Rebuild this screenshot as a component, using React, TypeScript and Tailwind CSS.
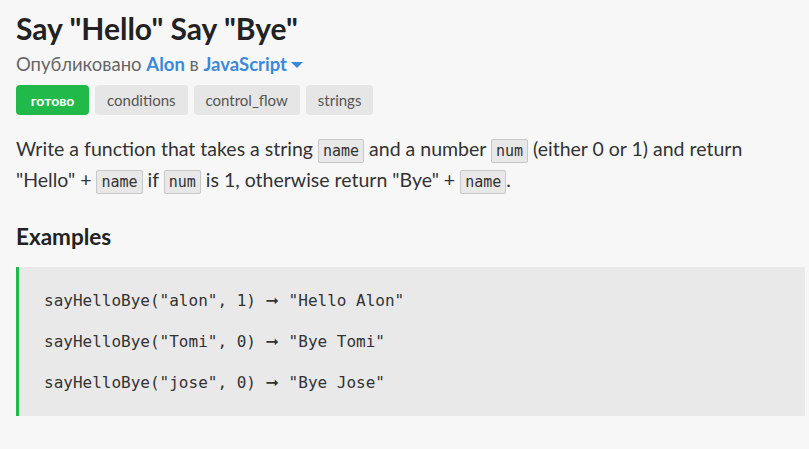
const TAGS = ["conditions", "control_flow", "strings"];

const EXAMPLES = [
  ['sayHelloBye("alon", 1)', '"Hello Alon"'],
  ['sayHelloBye("Tomi", 0)', '"Bye Tomi"'],
  ['sayHelloBye("jose", 0)', '"Bye Jose"'],
];

function Code({ children }: { children: string }) {
  return (
    <code className="rounded-[2px] border border-[#c8c8c8] bg-[#e8e8e8] px-[4px] py-[2px] font-['DejaVu_Sans_Mono',monospace] text-[15px] leading-none text-[#333]">
      {children}
    </code>
  );
}

export default function App() {
  return (
    <div className="min-h-[449px] w-[809px] bg-[#f7f7f7] pl-4 pr-1 pt-[10px] font-['Lato',sans-serif]">
      <h1 className="text-[30px] font-bold leading-[36px] text-[#222]">
        Say "Hello" Say "Bye"
      </h1>
      <p className="mt-[6px] flex items-center text-[18.5px] leading-[24px] text-[#666]">
        Опубликовано&nbsp;
        <span className="font-bold text-[#3b8ad9]">Alon</span>
        &nbsp;в&nbsp;
        <span className="font-bold text-[#3b8ad9]">JavaScript</span>
        <svg width="12" height="8" viewBox="0 0 12 8" className="ml-[4px] mt-[2px]">
          <path d="M0 1h12L6 7z" fill="#3b8ad9" />
        </svg>
      </p>
      <div className="mt-[9px] flex gap-[6px]">
        <span className="flex h-[30px] w-[73px] items-center justify-center rounded-[4px] bg-[#22b94b] text-[14px] font-bold text-white">
          готово
        </span>
        {TAGS.map((t) => (
          <span
            key={t}
            className="flex h-[30px] items-center rounded-[4px] bg-[#e6e6e6] px-[12px] text-[15px] text-[#555]"
          >
            {t}
          </span>
        ))}
      </div>
      <p className="mt-[18px] text-[19.5px] leading-[31px] text-[#333]">
        Write a function that takes a string <Code>name</Code> and a number{" "}
        <Code>num</Code> (either 0 or 1) and return
        <br />
        "Hello" + <Code>name</Code> if <Code>num</Code> is 1, otherwise return
        "Bye" + <Code>name</Code>.
      </p>
      <h2 className="mt-[28px] text-[22.5px] font-bold leading-[28px] text-[#222]">
        Examples
      </h2>
      <div className="mt-[16px] border-l-[3px] border-[#22b94b] bg-[#e9e9e9] py-[13px] pl-[25px] font-['DejaVu_Sans_Mono',monospace] text-[16px] leading-[41px] text-[#333]">
        {EXAMPLES.map(([call, result]) => (
          <div key={call}>
            {call} <span className="font-['DejaVu_Sans',sans-serif] font-bold">➞</span> {result}
          </div>
        ))}
      </div>
    </div>
  );
}
